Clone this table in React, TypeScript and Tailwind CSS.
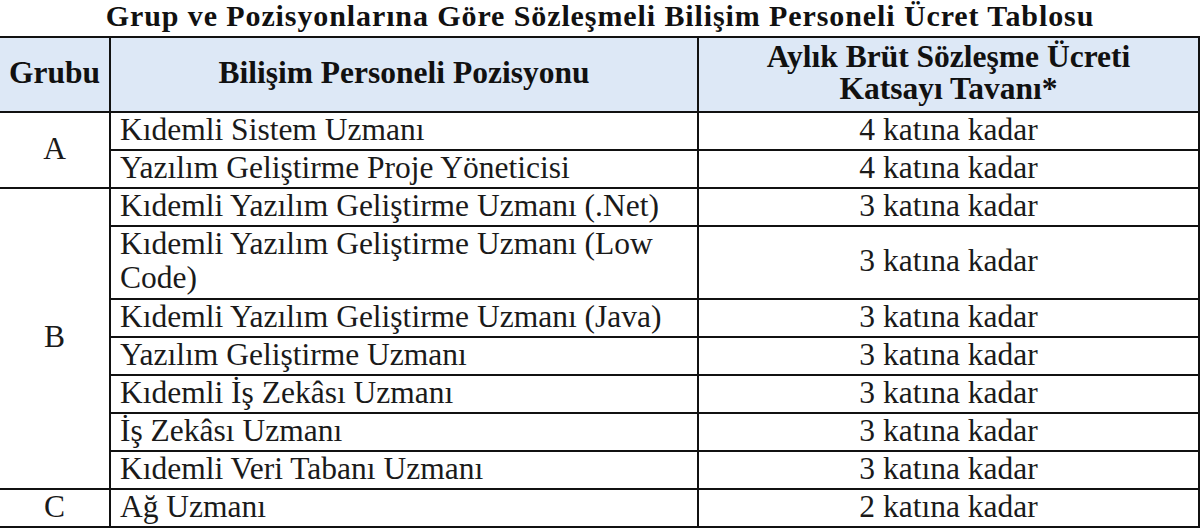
const rows: { group?: string; span?: number; name: React.ReactNode; value: string; tall?: boolean }[] = [
  { group: "A", span: 2, name: "Kıdemli Sistem Uzmanı", value: "4 katına kadar" },
  { name: "Yazılım Geliştirme Proje Yöneticisi", value: "4 katına kadar" },
  { group: "B", span: 7, name: "Kıdemli Yazılım Geliştirme Uzmanı (.Net)", value: "3 katına kadar" },
  {
    name: (
      <>
        Kıdemli Yazılım Geliştirme Uzmanı (Low
        <br />
        Code)
      </>
    ),
    value: "3 katına kadar",
    tall: true,
  },
  { name: "Kıdemli Yazılım Geliştirme Uzmanı (Java)", value: "3 katına kadar" },
  { name: "Yazılım Geliştirme Uzmanı", value: "3 katına kadar" },
  { name: "Kıdemli İş Zekâsı Uzmanı", value: "3 katına kadar" },
  { name: "İş Zekâsı Uzmanı", value: "3 katına kadar" },
  { name: "Kıdemli Veri Tabanı Uzmanı", value: "3 katına kadar" },
  { group: "C", span: 1, name: "Ağ Uzmanı", value: "2 katına kadar" },
];

const cell = "border-2 border-[#111] font-[family-name:'Liberation_Serif',serif] text-[31.5px] leading-[30px] text-[#1a1a1a] p-0 pb-[3px]";
const head = "border-2 border-[#111] font-[family-name:'Liberation_Serif',serif] text-[31.5px] leading-[32px] font-bold text-[#111] pb-[4px]";

export default function App() {
  return (
    <div className="w-[1200px] h-[528px] bg-white overflow-hidden font-[family-name:'Liberation_Serif',serif] text-[#1a1a1a]">
      <h1 className="h-[36px] text-center text-[30px] tracking-[0.9px] leading-[32px] font-bold text-[#111] whitespace-nowrap">
        Grup ve Pozisyonlarına Göre Sözleşmeli Bilişim Personeli Ücret Tablosu
      </h1>
      <table className="w-[1199px] table-fixed border-collapse">
        <colgroup>
          <col className="w-[110px]" />
          <col className="w-[588px]" />
          <col className="w-[501px]" />
        </colgroup>
        <thead>
          <tr className="h-[75px] bg-[#dde8f6]">
            <th className={`${head} border-l-0`}>Grubu</th>
            <th className={head}>Bilişim Personeli Pozisyonu</th>
            <th className={head}>
              Aylık Brüt Sözleşme Ücreti
              <br />
              Katsayı Tavanı*
            </th>
          </tr>
        </thead>
        <tbody>
          {rows.map((r, i) => (
            <tr key={i} className={r.tall ? "h-[73px]" : "h-[38px]"}>
              {r.group && (
                <td rowSpan={r.span} className={`${cell} border-l-0 text-center align-middle`}>
                  {r.group}
                </td>
              )}
              <td
                className={`${cell} pl-[9px] whitespace-nowrap ${
                  r.tall ? "align-top leading-[34px] pb-0" : "align-middle"
                }`}
              >
                {r.name}
              </td>
              <td className={`${cell} text-center align-middle`}>{r.value}</td>
            </tr>
          ))}
        </tbody>
      </table>
    </div>
  );
}
